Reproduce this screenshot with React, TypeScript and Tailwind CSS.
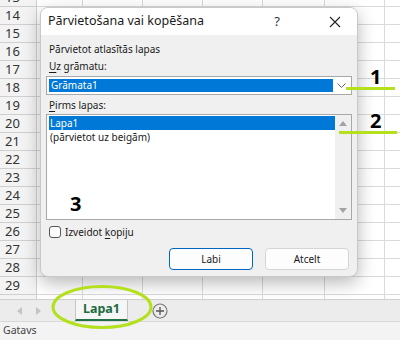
import * as React from "react";

const rows = [13, 14, 15, 16, 17, 18, 19, 20, 21, 22, 23, 24, 25, 26, 27, 28, 29, 30];
const cols = ["w-[46px]", "w-[60px]", "w-[60px]", "w-[60px]", "w-[62px]", "w-[60px]", "w-[60px]"];

const font = { fontFamily: '"Noto Sans", "Liberation Sans", sans-serif' };

const Sheet: React.FunctionComponent = () => {
  return (
    <div className="h-[299px] overflow-hidden bg-white">
      <div className="-mt-[11px]">
        {rows.map((r) => (
          <div key={r} className="flex h-[18px]">
            <div className="w-[37px] shrink-0 border-r border-b border-[#cfcfcf] bg-[#f3f3f3] pl-[5px] text-[13px] leading-[17px] text-[#333]">
              {r}
            </div>
            {cols.map((c, i) => (
              <div key={i} className={`${c} shrink-0 border-r border-b border-[#dadada]`} />
            ))}
          </div>
        ))}
      </div>
    </div>
  );
};

const Dialog: React.FunctionComponent = () => {
  return (
    <div className="absolute left-[40px] top-[7px] flex h-[270px] w-[318px] flex-col overflow-hidden rounded-[8px] border border-[#c8c8c8] bg-[#f0f0f0] text-[10px] text-[#1a1a1a] shadow-[0_6px_18px_rgba(0,0,0,0.28)]">
      {/* title bar */}
      <div className="flex h-[27px] shrink-0 items-center bg-white pl-[7px]">
        <span className="text-[12.5px]">Pārvietošana vai kopēšana</span>
        <span className="ml-auto mr-[49px] text-[13px] text-[#333]">?</span>
        <svg width="12" height="12" viewBox="0 0 12 12" className="mr-[16px]">
          <path d="M1 1 L11 11 M11 1 L1 11" stroke="#222" strokeWidth="1.1" />
        </svg>
      </div>
      <div className="flex flex-1 flex-col px-[5px]">
        <div className="mt-[7px] pl-[3px] leading-[14px]">Pārvietot atlasītās lapas</div>
        <div className="mt-[3px] pl-[3px] leading-[14px]">
          <span className="underline underline-offset-2">U</span>z grāmatu:
        </div>
        {/* select */}
        <div className="mt-[3px] flex h-[19px] items-stretch border border-[#a8a8a8] bg-white p-[2px]">
          <div className="flex flex-1 items-center bg-[#0078d7] pl-[2px] leading-[13px] text-white">Grāmata1</div>
          <div className="flex w-[16px] items-center justify-center">
            <svg width="9" height="6" viewBox="0 0 9 6">
              <path d="M0.5 0.5 L4.5 4.5 L8.5 0.5" fill="none" stroke="#666" strokeWidth="1" />
            </svg>
          </div>
        </div>
        <div className="mt-[3px] pl-[3px] leading-[14px]">
          <span className="underline underline-offset-2">P</span>irms lapas:
        </div>
        {/* list */}
        <div className="mt-[2px] flex h-[106px] border border-[#a8a8a8] bg-white">
          <div className="flex-1 pl-[2px] pt-[1px]">
            <div className="h-[14px] bg-[#0078d7] pl-[1px] leading-[14px] text-white">Lapa1</div>
            <div className="h-[14px] pl-[1px] leading-[14px]">(pārvietot uz beigām)</div>
          </div>
          <div className="flex w-[16px] flex-col items-center justify-between bg-[#f0f0f0] py-[6px]">
            <svg width="8" height="5" viewBox="0 0 8 5">
              <path d="M0 5 L4 0 L8 5 Z" fill="#a3a3a3" />
            </svg>
            <svg width="8" height="5" viewBox="0 0 8 5">
              <path d="M0 0 L8 0 L4 5 Z" fill="#a3a3a3" />
            </svg>
          </div>
        </div>
        <div className="mt-[5px] flex items-center pl-[3px]">
          <div className="h-[12px] w-[12px] rounded-[3px] border border-[#555] bg-[#fbfbfb]" />
          <span className="ml-[4px] leading-[14px]">
            Izveidot <span className="underline underline-offset-2">k</span>opiju
          </span>
        </div>
        <div className="mt-auto mb-[6px] flex justify-end gap-[12px] pr-[3px]">
          <div className="flex h-[22px] w-[84px] items-center justify-center rounded-[4px] border-[1.5px] border-[#0067c0] bg-[#fdfdfd]">
            Labi
          </div>
          <div className="flex h-[22px] w-[84px] items-center justify-center rounded-[4px] border border-[#d5d5d5] bg-[#fdfdfd]">
            Atcelt
          </div>
        </div>
      </div>
    </div>
  );
};

export default function App() {
  return (
    <div className="relative h-[340px] w-[400px] overflow-hidden bg-white" style={font}>
      <Sheet />
      {/* tab bar */}
      <div className="flex h-[22px] items-stretch border-t border-[#cfcfcf] bg-[#ececec]">
        <div className="flex w-[75px] items-center gap-[14px] pl-[17px]">
          <svg width="5" height="8" viewBox="0 0 5 8">
            <path d="M5 0 L0 4 L5 8 Z" fill="#c4c4c4" />
          </svg>
          <svg width="5" height="8" viewBox="0 0 5 8">
            <path d="M0 0 L5 4 L0 8 Z" fill="#c4c4c4" />
          </svg>
        </div>
        <div className="flex w-[53px] items-center justify-center border-x border-b-2 border-x-[#c6c6c6] border-b-[#217346] bg-[#f6f6f6] text-[12.5px] font-bold text-[#1d6b40]">
          Lapa1
        </div>
        <div className="flex items-center pl-[24px]">
          <svg width="16" height="16" viewBox="0 0 16 16">
            <circle cx="8" cy="8" r="7" fill="none" stroke="#7a7a7a" strokeWidth="1.2" />
            <path d="M8 4 V12 M4 8 H12" stroke="#555" strokeWidth="1.3" />
          </svg>
        </div>
      </div>
      {/* status bar */}
      <div className="flex h-[19px] items-center border-t border-[#d8d8d8] bg-[#f3f3f3] pl-[3px] text-[10.5px] text-[#444]">
        Gatavs
      </div>

      <Dialog />

      {/* annotations */}
      <div className="absolute left-[370px] top-[65px] text-[20px] font-bold leading-[24px] text-black">1</div>
      <div className="absolute left-[346px] top-[87px] h-[3px] w-[49px] bg-[#b4e01e]" />
      <div className="absolute left-[370px] top-[109px] text-[20px] font-bold leading-[24px] text-black">2</div>
      <div className="absolute left-[339px] top-[131px] h-[3px] w-[58px] bg-[#b4e01e]" />
      <div className="absolute left-[70px] top-[192px] text-[20px] font-bold leading-[24px] text-black">3</div>
      <svg className="absolute left-[50px] top-[284px]" width="104" height="46" viewBox="0 0 104 46">
        <ellipse cx="52" cy="23" rx="49" ry="20.5" fill="none" stroke="#b4e01e" strokeWidth="3" />
      </svg>
    </div>
  );
}
